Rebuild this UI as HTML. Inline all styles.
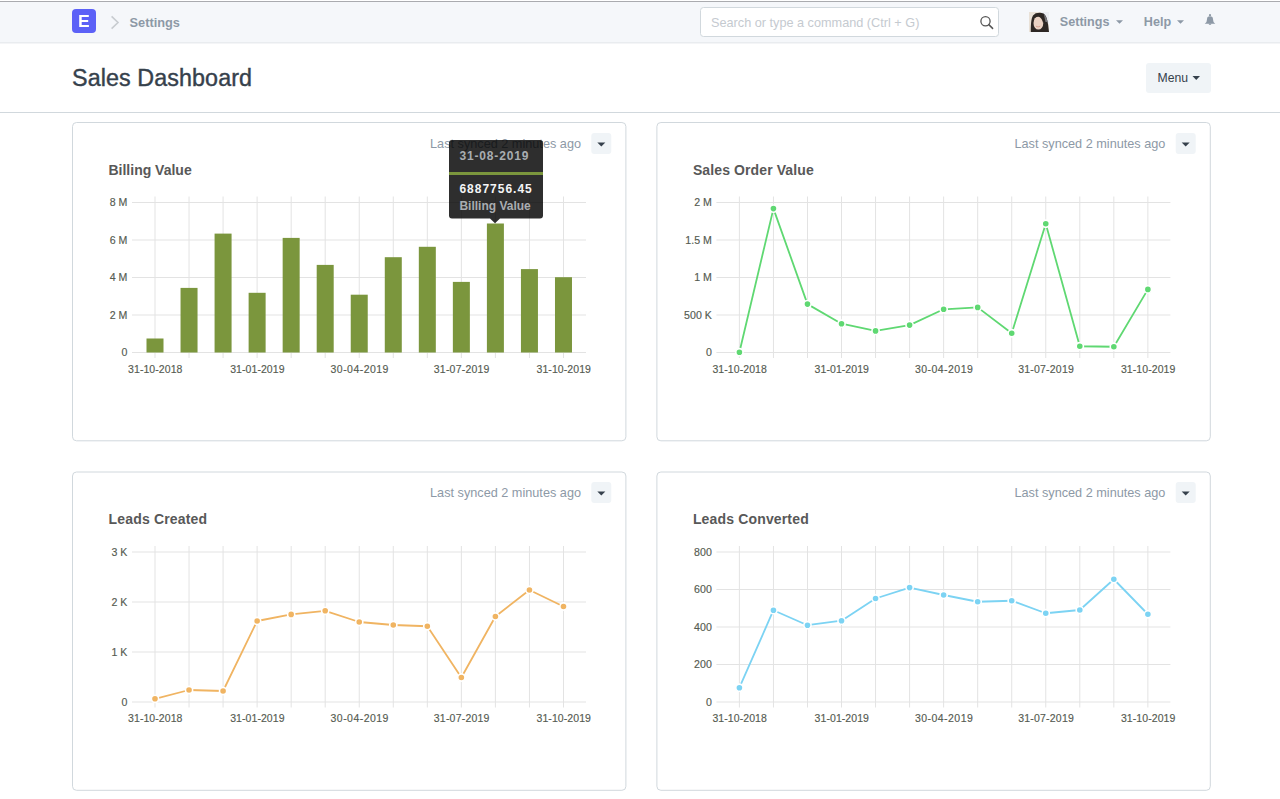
<!DOCTYPE html>
<html><head><meta charset="utf-8"><title>Sales Dashboard</title>
<style>
html,body{margin:0;padding:0;background:#fff;}
body{width:1280px;height:799px;overflow:hidden;position:relative;font-family:"Liberation Sans", sans-serif;}
svg{position:absolute;left:0;top:0;}
text{font-family:"Liberation Sans", sans-serif;}
.gl{stroke:#e3e3e3;stroke-width:1;}
.yl{font-size:10.6px;fill:#555b51;text-anchor:end;stroke:#555b51;stroke-width:0.15px;}
.xl{font-size:10.5px;fill:#555b51;text-anchor:middle;letter-spacing:0.12px;stroke:#555b51;stroke-width:0.15px;}
.card{fill:#fff;stroke:#d1d8dd;stroke-width:1;}
.title{font-size:14px;font-weight:bold;fill:#585858;}
.sync{font-size:12.7px;fill:#8d99a6;text-anchor:end;}
.tt1{font-size:12px;font-weight:bold;fill:#a9adb1;letter-spacing:0.85px;}
.tt2{font-size:12px;font-weight:bold;fill:#f4f5f6;letter-spacing:1.0px;}
.tt3{font-size:12px;font-weight:bold;fill:#a9adb1;}
.nav{font-size:13px;font-weight:bold;fill:#8d99a6;}
</style></head>
<body>
<svg width="1280" height="799" viewBox="0 0 1280 799">
<rect x="0" y="0" width="1280" height="799" fill="#fff"/>
<!-- navbar -->
<rect x="0" y="1" width="1280" height="1" fill="#aaabaf"/>
<rect x="0" y="2" width="1280" height="41" fill="#f5f7fa"/>
<rect x="0" y="42" width="1280" height="1.5" fill="#e9ecef"/>
<rect x="72" y="9" width="24" height="24" rx="4" fill="#5c61f7"/>
<path d="M79.2 15h9.6v2.1h-7.1v2.9h6.5v2h-6.5v2.9h7.2V27H79.2z" fill="#fff"/>
<path d="M111.6 16.4l6.4 6.1l-6.4 6.1" fill="none" stroke="#c8ccd0" stroke-width="1.6"/>
<text x="129.5" y="26.8" class="nav" style="font-size:12.8px">Settings</text>
<rect x="700.5" y="7.5" width="298" height="29" rx="3" fill="#fff" stroke="#d1d8dd"/>
<text x="711" y="27" style="font-size:12.7px;fill:#c5cad0">Search or type a command (Ctrl + G)</text>
<circle cx="985.5" cy="21.3" r="4.6" fill="none" stroke="#555" stroke-width="1.3"/>
<path d="M988.8 24.6l3.8 3.8" stroke="#555" stroke-width="1.5" stroke-linecap="round"/>
<!-- avatar -->
<g>
<rect x="1029" y="12" width="20" height="20" fill="#e9e1d7"/>
<rect x="1041" y="12" width="8" height="12" fill="#eceef3"/>
<path d="M1030.8 32C1030.8 25 1031 19 1033 15.5C1035 12.6 1040.5 11.8 1043.6 13.6C1046.4 15.6 1047.6 20.5 1048.2 25.5L1049 32Z" fill="#2d2724"/>
<path d="M1043.8 14C1045.8 15.8 1047 18.8 1047.6 22L1045.5 22Z" fill="#77767a"/>
<ellipse cx="1038.4" cy="23" rx="4.9" ry="6.6" fill="#ead2c4"/>
<path d="M1035 13.8C1038 13 1042 13.6 1043.6 15.6C1044.2 18.5 1044 21 1043.2 23.5C1042.5 20 1041 17.2 1038.5 16.5C1036.8 16.2 1035.3 16.8 1034.2 17.5Z" fill="#2d2724"/>
<path d="M1035.9 26.2q2.2 1.5 4.4 0" stroke="#d9a293" stroke-width="1" fill="none"/>
</g>
<text x="1059.8" y="26.2" class="nav" style="font-size:12.6px">Settings</text>
<path d="M1116 20.3h7l-3.5 3.5z" fill="#8d99a6"/>
<text x="1143.8" y="26.2" class="nav" style="font-size:12.6px">Help</text>
<path d="M1177 20.3h7l-3.5 3.5z" fill="#8d99a6"/>
<circle cx="1210" cy="15.2" r="1.1" fill="#8d99a6"/>
<path d="M1207.1 18.6C1207.1 15.4 1212.9 15.4 1212.9 18.6L1213.4 21.6C1213.7 22.7 1214.6 23.2 1215.3 23.7L1204.7 23.7C1205.4 23.2 1206.3 22.7 1206.6 21.6Z" fill="#8d99a6"/>
<path d="M1208.6 23.6a1.4 1.4 0 0 0 2.8 0z" fill="#8d99a6"/>
<!-- page head -->
<text x="72" y="85.8" style="font-size:23.3px;fill:#36414c;stroke:#36414c;stroke-width:0.4px;letter-spacing:0.09px">Sales Dashboard</text>
<rect x="1146" y="63" width="65" height="30" rx="3" fill="#f0f4f7"/>
<text x="1157.5" y="81.8" style="font-size:12.2px;fill:#36414c">Menu</text>
<path d="M1192.5 76h7.5l-3.75 4z" fill="#36414c"/>
<rect x="0" y="112" width="1280" height="1" fill="#d1d8dd"/>
<rect x="72.5" y="122.5" width="553.4" height="318.3" rx="4" class="card"/>
<text x="108.5" y="174.5" class="title" textLength="83.2" lengthAdjust="spacing">Billing Value</text>
<text x="581" y="148.3" class="sync">Last synced 2 minutes ago</text>
<rect x="591.3" y="133" width="20" height="21" rx="3" fill="#f0f4f7"/>
<path d="M597.3 142.5h8l-4 4z" fill="#36414c"/>
<rect x="656.9" y="122.5" width="553.4" height="318.3" rx="4" class="card"/>
<text x="692.9" y="174.5" class="title" textLength="120.8" lengthAdjust="spacing">Sales Order Value</text>
<text x="1165.4" y="148.3" class="sync">Last synced 2 minutes ago</text>
<rect x="1175.6999999999998" y="133" width="20" height="21" rx="3" fill="#f0f4f7"/>
<path d="M1181.6999999999998 142.5h8l-4 4z" fill="#36414c"/>
<rect x="72.5" y="472.0" width="553.4" height="318.3" rx="4" class="card"/>
<text x="108.5" y="523.5" class="title" textLength="98.6" lengthAdjust="spacing">Leads Created</text>
<text x="581" y="497.3" class="sync">Last synced 2 minutes ago</text>
<rect x="591.3" y="482.0" width="20" height="21" rx="3" fill="#f0f4f7"/>
<path d="M597.3 491.5h8l-4 4z" fill="#36414c"/>
<rect x="656.9" y="472.0" width="553.4" height="318.3" rx="4" class="card"/>
<text x="692.9" y="523.5" class="title" textLength="115.8" lengthAdjust="spacing">Leads Converted</text>
<text x="1165.4" y="497.3" class="sync">Last synced 2 minutes ago</text>
<rect x="1175.6999999999998" y="482.0" width="20" height="21" rx="3" fill="#f0f4f7"/>
<path d="M1181.6999999999998 491.5h8l-4 4z" fill="#36414c"/>
<line x1="155.0" y1="196.5" x2="155.0" y2="358" class="gl"/>
<line x1="189.04" y1="196.5" x2="189.04" y2="358" class="gl"/>
<line x1="223.07999999999998" y1="196.5" x2="223.07999999999998" y2="358" class="gl"/>
<line x1="257.12" y1="196.5" x2="257.12" y2="358" class="gl"/>
<line x1="291.15999999999997" y1="196.5" x2="291.15999999999997" y2="358" class="gl"/>
<line x1="325.2" y1="196.5" x2="325.2" y2="358" class="gl"/>
<line x1="359.24" y1="196.5" x2="359.24" y2="358" class="gl"/>
<line x1="393.28" y1="196.5" x2="393.28" y2="358" class="gl"/>
<line x1="427.32" y1="196.5" x2="427.32" y2="358" class="gl"/>
<line x1="461.36" y1="196.5" x2="461.36" y2="358" class="gl"/>
<line x1="495.4" y1="196.5" x2="495.4" y2="358" class="gl"/>
<line x1="529.44" y1="196.5" x2="529.44" y2="358" class="gl"/>
<line x1="563.48" y1="196.5" x2="563.48" y2="358" class="gl"/>
<line x1="132" y1="202.5" x2="586" y2="202.5" class="gl"/>
<text x="127.4" y="206.0" class="yl">8 M</text>
<line x1="132" y1="240" x2="586" y2="240" class="gl"/>
<text x="127.4" y="243.5" class="yl">6 M</text>
<line x1="132" y1="277.5" x2="586" y2="277.5" class="gl"/>
<text x="127.4" y="281.0" class="yl">4 M</text>
<line x1="132" y1="315" x2="586" y2="315" class="gl"/>
<text x="127.4" y="318.5" class="yl">2 M</text>
<line x1="132" y1="352.5" x2="586" y2="352.5" class="gl"/>
<text x="127.4" y="356.0" class="yl">0</text>
<text x="155.3" y="372.7" class="xl" textLength="54.5" lengthAdjust="spacing">31-10-2018</text>
<text x="257.42" y="372.7" class="xl" textLength="54.5" lengthAdjust="spacing">31-01-2019</text>
<text x="359.54" y="372.7" class="xl" textLength="58.0" lengthAdjust="spacing">30-04-2019</text>
<text x="461.66" y="372.7" class="xl" textLength="55.7" lengthAdjust="spacing">31-07-2019</text>
<text x="563.78" y="372.7" class="xl" textLength="54.5" lengthAdjust="spacing">31-10-2019</text>
<line x1="739.4" y1="196.5" x2="739.4" y2="358" class="gl"/>
<line x1="773.4399999999999" y1="196.5" x2="773.4399999999999" y2="358" class="gl"/>
<line x1="807.48" y1="196.5" x2="807.48" y2="358" class="gl"/>
<line x1="841.52" y1="196.5" x2="841.52" y2="358" class="gl"/>
<line x1="875.56" y1="196.5" x2="875.56" y2="358" class="gl"/>
<line x1="909.5999999999999" y1="196.5" x2="909.5999999999999" y2="358" class="gl"/>
<line x1="943.64" y1="196.5" x2="943.64" y2="358" class="gl"/>
<line x1="977.68" y1="196.5" x2="977.68" y2="358" class="gl"/>
<line x1="1011.72" y1="196.5" x2="1011.72" y2="358" class="gl"/>
<line x1="1045.76" y1="196.5" x2="1045.76" y2="358" class="gl"/>
<line x1="1079.8" y1="196.5" x2="1079.8" y2="358" class="gl"/>
<line x1="1113.8400000000001" y1="196.5" x2="1113.8400000000001" y2="358" class="gl"/>
<line x1="1147.88" y1="196.5" x2="1147.88" y2="358" class="gl"/>
<line x1="716.4" y1="202.5" x2="1170.4" y2="202.5" class="gl"/>
<text x="711.8" y="206.0" class="yl">2 M</text>
<line x1="716.4" y1="240" x2="1170.4" y2="240" class="gl"/>
<text x="711.8" y="243.5" class="yl">1.5 M</text>
<line x1="716.4" y1="277.5" x2="1170.4" y2="277.5" class="gl"/>
<text x="711.8" y="281.0" class="yl">1 M</text>
<line x1="716.4" y1="315" x2="1170.4" y2="315" class="gl"/>
<text x="711.8" y="318.5" class="yl">500 K</text>
<line x1="716.4" y1="352.5" x2="1170.4" y2="352.5" class="gl"/>
<text x="711.8" y="356.0" class="yl">0</text>
<text x="739.6999999999999" y="372.7" class="xl" textLength="54.5" lengthAdjust="spacing">31-10-2018</text>
<text x="841.8199999999999" y="372.7" class="xl" textLength="54.5" lengthAdjust="spacing">31-01-2019</text>
<text x="943.9399999999999" y="372.7" class="xl" textLength="58.0" lengthAdjust="spacing">30-04-2019</text>
<text x="1046.06" y="372.7" class="xl" textLength="55.7" lengthAdjust="spacing">31-07-2019</text>
<text x="1148.18" y="372.7" class="xl" textLength="54.5" lengthAdjust="spacing">31-10-2019</text>
<line x1="155.0" y1="546.0" x2="155.0" y2="707.5" class="gl"/>
<line x1="189.04" y1="546.0" x2="189.04" y2="707.5" class="gl"/>
<line x1="223.07999999999998" y1="546.0" x2="223.07999999999998" y2="707.5" class="gl"/>
<line x1="257.12" y1="546.0" x2="257.12" y2="707.5" class="gl"/>
<line x1="291.15999999999997" y1="546.0" x2="291.15999999999997" y2="707.5" class="gl"/>
<line x1="325.2" y1="546.0" x2="325.2" y2="707.5" class="gl"/>
<line x1="359.24" y1="546.0" x2="359.24" y2="707.5" class="gl"/>
<line x1="393.28" y1="546.0" x2="393.28" y2="707.5" class="gl"/>
<line x1="427.32" y1="546.0" x2="427.32" y2="707.5" class="gl"/>
<line x1="461.36" y1="546.0" x2="461.36" y2="707.5" class="gl"/>
<line x1="495.4" y1="546.0" x2="495.4" y2="707.5" class="gl"/>
<line x1="529.44" y1="546.0" x2="529.44" y2="707.5" class="gl"/>
<line x1="563.48" y1="546.0" x2="563.48" y2="707.5" class="gl"/>
<line x1="132" y1="552.0" x2="586" y2="552.0" class="gl"/>
<text x="127.4" y="555.5" class="yl">3 K</text>
<line x1="132" y1="602.0" x2="586" y2="602.0" class="gl"/>
<text x="127.4" y="605.5" class="yl">2 K</text>
<line x1="132" y1="652.0" x2="586" y2="652.0" class="gl"/>
<text x="127.4" y="655.5" class="yl">1 K</text>
<line x1="132" y1="702.0" x2="586" y2="702.0" class="gl"/>
<text x="127.4" y="705.5" class="yl">0</text>
<text x="155.3" y="722.2" class="xl" textLength="54.5" lengthAdjust="spacing">31-10-2018</text>
<text x="257.42" y="722.2" class="xl" textLength="54.5" lengthAdjust="spacing">31-01-2019</text>
<text x="359.54" y="722.2" class="xl" textLength="58.0" lengthAdjust="spacing">30-04-2019</text>
<text x="461.66" y="722.2" class="xl" textLength="55.7" lengthAdjust="spacing">31-07-2019</text>
<text x="563.78" y="722.2" class="xl" textLength="54.5" lengthAdjust="spacing">31-10-2019</text>
<line x1="739.4" y1="546.0" x2="739.4" y2="707.5" class="gl"/>
<line x1="773.4399999999999" y1="546.0" x2="773.4399999999999" y2="707.5" class="gl"/>
<line x1="807.48" y1="546.0" x2="807.48" y2="707.5" class="gl"/>
<line x1="841.52" y1="546.0" x2="841.52" y2="707.5" class="gl"/>
<line x1="875.56" y1="546.0" x2="875.56" y2="707.5" class="gl"/>
<line x1="909.5999999999999" y1="546.0" x2="909.5999999999999" y2="707.5" class="gl"/>
<line x1="943.64" y1="546.0" x2="943.64" y2="707.5" class="gl"/>
<line x1="977.68" y1="546.0" x2="977.68" y2="707.5" class="gl"/>
<line x1="1011.72" y1="546.0" x2="1011.72" y2="707.5" class="gl"/>
<line x1="1045.76" y1="546.0" x2="1045.76" y2="707.5" class="gl"/>
<line x1="1079.8" y1="546.0" x2="1079.8" y2="707.5" class="gl"/>
<line x1="1113.8400000000001" y1="546.0" x2="1113.8400000000001" y2="707.5" class="gl"/>
<line x1="1147.88" y1="546.0" x2="1147.88" y2="707.5" class="gl"/>
<line x1="716.4" y1="552.0" x2="1170.4" y2="552.0" class="gl"/>
<text x="711.8" y="555.5" class="yl">800</text>
<line x1="716.4" y1="589.5" x2="1170.4" y2="589.5" class="gl"/>
<text x="711.8" y="593.0" class="yl">600</text>
<line x1="716.4" y1="627.0" x2="1170.4" y2="627.0" class="gl"/>
<text x="711.8" y="630.5" class="yl">400</text>
<line x1="716.4" y1="664.5" x2="1170.4" y2="664.5" class="gl"/>
<text x="711.8" y="668.0" class="yl">200</text>
<line x1="716.4" y1="702.0" x2="1170.4" y2="702.0" class="gl"/>
<text x="711.8" y="705.5" class="yl">0</text>
<text x="739.6999999999999" y="722.2" class="xl" textLength="54.5" lengthAdjust="spacing">31-10-2018</text>
<text x="841.8199999999999" y="722.2" class="xl" textLength="54.5" lengthAdjust="spacing">31-01-2019</text>
<text x="943.9399999999999" y="722.2" class="xl" textLength="58.0" lengthAdjust="spacing">30-04-2019</text>
<text x="1046.06" y="722.2" class="xl" textLength="55.7" lengthAdjust="spacing">31-07-2019</text>
<text x="1148.18" y="722.2" class="xl" textLength="54.5" lengthAdjust="spacing">31-10-2019</text>
<rect x="146.5" y="338.5" width="17" height="14" fill="#7b963d"/>
<rect x="180.54" y="287.9" width="17" height="64.6" fill="#7b963d"/>
<rect x="214.57999999999998" y="233.6" width="17" height="118.9" fill="#7b963d"/>
<rect x="248.62" y="292.8" width="17" height="59.7" fill="#7b963d"/>
<rect x="282.65999999999997" y="237.9" width="17" height="114.6" fill="#7b963d"/>
<rect x="316.7" y="264.9" width="17" height="87.6" fill="#7b963d"/>
<rect x="350.74" y="294.7" width="17" height="57.8" fill="#7b963d"/>
<rect x="384.78" y="257.2" width="17" height="95.3" fill="#7b963d"/>
<rect x="418.82" y="246.8" width="17" height="105.7" fill="#7b963d"/>
<rect x="452.86" y="281.9" width="17" height="70.6" fill="#7b963d"/>
<rect x="486.9" y="223.5" width="17" height="129" fill="#7b963d"/>
<rect x="520.94" y="269.1" width="17" height="83.4" fill="#7b963d"/>
<rect x="554.98" y="277.2" width="17" height="75.3" fill="#7b963d"/>
<path d="M739.4 352.2 L773.44 208.6 L807.48 304.1 L841.52 323.7 L875.56 330.9 L909.6 325.1 L943.64 309.3 L977.68 307.4 L1011.72 333.25 L1045.76 223.75 L1079.8 346.25 L1113.84 346.75 L1147.88 289.4" fill="none" stroke="#5fd872" stroke-width="1.8" stroke-linejoin="round"/>
<circle cx="739.4" cy="352.2" r="3.6" fill="#5fd872" stroke="#fff" stroke-width="1.6"/>
<circle cx="773.44" cy="208.6" r="3.6" fill="#5fd872" stroke="#fff" stroke-width="1.6"/>
<circle cx="807.48" cy="304.1" r="3.6" fill="#5fd872" stroke="#fff" stroke-width="1.6"/>
<circle cx="841.52" cy="323.7" r="3.6" fill="#5fd872" stroke="#fff" stroke-width="1.6"/>
<circle cx="875.56" cy="330.9" r="3.6" fill="#5fd872" stroke="#fff" stroke-width="1.6"/>
<circle cx="909.6" cy="325.1" r="3.6" fill="#5fd872" stroke="#fff" stroke-width="1.6"/>
<circle cx="943.64" cy="309.3" r="3.6" fill="#5fd872" stroke="#fff" stroke-width="1.6"/>
<circle cx="977.68" cy="307.4" r="3.6" fill="#5fd872" stroke="#fff" stroke-width="1.6"/>
<circle cx="1011.72" cy="333.25" r="3.6" fill="#5fd872" stroke="#fff" stroke-width="1.6"/>
<circle cx="1045.76" cy="223.75" r="3.6" fill="#5fd872" stroke="#fff" stroke-width="1.6"/>
<circle cx="1079.8" cy="346.25" r="3.6" fill="#5fd872" stroke="#fff" stroke-width="1.6"/>
<circle cx="1113.84" cy="346.75" r="3.6" fill="#5fd872" stroke="#fff" stroke-width="1.6"/>
<circle cx="1147.88" cy="289.4" r="3.6" fill="#5fd872" stroke="#fff" stroke-width="1.6"/>
<path d="M155 698.8 L189.04 690 L223.08 691 L257.12 621 L291.16 614.4 L325.2 610.8 L359.24 622 L393.28 625 L427.32 626.25 L461.36 677.5 L495.4 616.5 L529.44 590 L563.48 606.5" fill="none" stroke="#f0b462" stroke-width="1.8" stroke-linejoin="round"/>
<circle cx="155" cy="698.8" r="3.6" fill="#f0b462" stroke="#fff" stroke-width="1.6"/>
<circle cx="189.04" cy="690" r="3.6" fill="#f0b462" stroke="#fff" stroke-width="1.6"/>
<circle cx="223.08" cy="691" r="3.6" fill="#f0b462" stroke="#fff" stroke-width="1.6"/>
<circle cx="257.12" cy="621" r="3.6" fill="#f0b462" stroke="#fff" stroke-width="1.6"/>
<circle cx="291.16" cy="614.4" r="3.6" fill="#f0b462" stroke="#fff" stroke-width="1.6"/>
<circle cx="325.2" cy="610.8" r="3.6" fill="#f0b462" stroke="#fff" stroke-width="1.6"/>
<circle cx="359.24" cy="622" r="3.6" fill="#f0b462" stroke="#fff" stroke-width="1.6"/>
<circle cx="393.28" cy="625" r="3.6" fill="#f0b462" stroke="#fff" stroke-width="1.6"/>
<circle cx="427.32" cy="626.25" r="3.6" fill="#f0b462" stroke="#fff" stroke-width="1.6"/>
<circle cx="461.36" cy="677.5" r="3.6" fill="#f0b462" stroke="#fff" stroke-width="1.6"/>
<circle cx="495.4" cy="616.5" r="3.6" fill="#f0b462" stroke="#fff" stroke-width="1.6"/>
<circle cx="529.44" cy="590" r="3.6" fill="#f0b462" stroke="#fff" stroke-width="1.6"/>
<circle cx="563.48" cy="606.5" r="3.6" fill="#f0b462" stroke="#fff" stroke-width="1.6"/>
<path d="M739.4 687.7 L773.44 610.2 L807.48 625.2 L841.52 620.7 L875.56 598.5 L909.6 587.6 L943.64 595 L977.68 601.75 L1011.72 600.75 L1045.76 613.25 L1079.8 610 L1113.84 579.25 L1147.88 614.25" fill="none" stroke="#7cd3f3" stroke-width="1.8" stroke-linejoin="round"/>
<circle cx="739.4" cy="687.7" r="3.6" fill="#7cd3f3" stroke="#fff" stroke-width="1.6"/>
<circle cx="773.44" cy="610.2" r="3.6" fill="#7cd3f3" stroke="#fff" stroke-width="1.6"/>
<circle cx="807.48" cy="625.2" r="3.6" fill="#7cd3f3" stroke="#fff" stroke-width="1.6"/>
<circle cx="841.52" cy="620.7" r="3.6" fill="#7cd3f3" stroke="#fff" stroke-width="1.6"/>
<circle cx="875.56" cy="598.5" r="3.6" fill="#7cd3f3" stroke="#fff" stroke-width="1.6"/>
<circle cx="909.6" cy="587.6" r="3.6" fill="#7cd3f3" stroke="#fff" stroke-width="1.6"/>
<circle cx="943.64" cy="595" r="3.6" fill="#7cd3f3" stroke="#fff" stroke-width="1.6"/>
<circle cx="977.68" cy="601.75" r="3.6" fill="#7cd3f3" stroke="#fff" stroke-width="1.6"/>
<circle cx="1011.72" cy="600.75" r="3.6" fill="#7cd3f3" stroke="#fff" stroke-width="1.6"/>
<circle cx="1045.76" cy="613.25" r="3.6" fill="#7cd3f3" stroke="#fff" stroke-width="1.6"/>
<circle cx="1079.8" cy="610" r="3.6" fill="#7cd3f3" stroke="#fff" stroke-width="1.6"/>
<circle cx="1113.84" cy="579.25" r="3.6" fill="#7cd3f3" stroke="#fff" stroke-width="1.6"/>
<circle cx="1147.88" cy="614.25" r="3.6" fill="#7cd3f3" stroke="#fff" stroke-width="1.6"/>
<g>
<path d="M452 140h88a3 3 0 0 1 3 3v72.5a3 3 0 0 1-3 3h-40l-5 4.8l-5-4.8h-38a3 3 0 0 1-3-3v-72.5a3 3 0 0 1 3-3z" fill="rgba(0,0,0,0.82)"/>
<rect x="449" y="172" width="94" height="3" fill="#7b963d"/>
<text x="459.4" y="159.6" class="tt1">31-08-2019</text>
<text x="459.4" y="192.5" class="tt2">6887756.45</text>
<text x="459.4" y="209.6" class="tt3">Billing Value</text>
</g>
</svg>
</body></html>
